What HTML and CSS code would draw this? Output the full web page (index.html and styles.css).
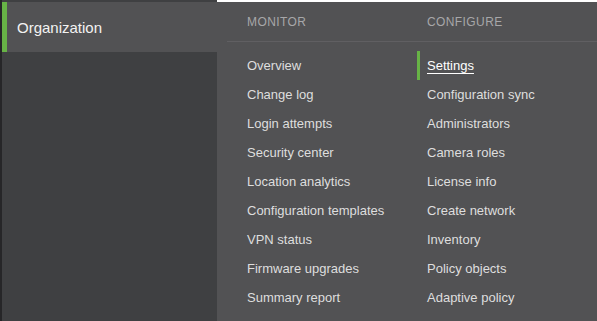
FILE: index.html
```html
<!DOCTYPE html>
<html lang="en">

<head>
  <meta charset="UTF-8" />
  <title>Organization menu</title>
  <link rel="stylesheet" href="styles.css">
</head>

<body>
  <div class="layout">
    <!-- Left nav -->
    <div class="sidebar">
      <div class="nav-item active">Organization</div>
    </div>

    <!-- Flyout menu -->
    <div class="flyout">
      <div class="flyout-head">
        <div class="col-title">Monitor</div>
        <div class="col-title">Configure</div>
      </div>
      <div class="flyout-body">
        <ul class="col">
          <li>Overview</li>
          <li>Change log</li>
          <li>Login attempts</li>
          <li>Security center</li>
          <li>Location analytics</li>
          <li>Configuration templates</li>
          <li>VPN status</li>
          <li>Firmware upgrades</li>
          <li>Summary report</li>
        </ul>
        <ul class="col">
          <li class="current">Settings</li>
          <li>Configuration sync</li>
          <li>Administrators</li>
          <li>Camera roles</li>
          <li>License info</li>
          <li>Create network</li>
          <li>Inventory</li>
          <li>Policy objects</li>
          <li>Adaptive policy</li>
        </ul>
      </div>
    </div>
  </div>
</body>

</html>
```

FILE: styles.css
```css
:root {
  --side: #3f4042;
  --panel: #525254;
  --line: #605f62;
  --text: #dedede;
  --muted: #a7a7a9;
  --green: #67b346;
}
* {
  box-sizing: border-box;
  margin: 0;
  padding: 0;
}
body {
  background: #fff;
  font-family: "Liberation Sans", Arial, sans-serif;
  height: 321px;
  overflow: hidden;
}
.layout {
  display: flex;
  height: 321px;
}
/* Sidebar */
.sidebar {
  width: 217px;
  flex-shrink: 0;
  background: var(--side);
  border-left: 2px solid #262628;
  padding-top: 2px;
}
.nav-item {
  height: 50px;
  display: flex;
  align-items: center;
  padding-left: 10px;
  font-size: 15px;
  color: #f2f2f2;
  border-left: 5px solid transparent;
}
.nav-item.active {
  background: var(--panel);
  border-left-color: var(--green);
}
/* Flyout */
.flyout {
  flex: 1;
  margin-top: 2px;
  margin-right: 2px;
  background: var(--panel);
  border-top-right-radius: 5px;
  padding: 0 10px;
}
.flyout-head {
  display: flex;
  height: 40px;
  align-items: center;
  padding-left: 20px;
  border-bottom: 1px solid var(--line);
}
.col-title {
  width: 180px;
  font-size: 12px;
  letter-spacing: 0.4px;
  text-transform: uppercase;
  color: var(--muted);
}
.flyout-body {
  display: flex;
  padding-top: 9px;
  padding-left: 10px;
}
.col {
  list-style: none;
  width: 180px;
}
.col li {
  height: 29px;
  display: flex;
  align-items: center;
  padding-left: 7px;
  border-left: 3px solid transparent;
  font-size: 13px;
  color: var(--text);
}
.col li.current {
  border-left-color: var(--green);
  color: #fff;
  text-decoration: underline;
  text-underline-offset: 3px;
}
```
